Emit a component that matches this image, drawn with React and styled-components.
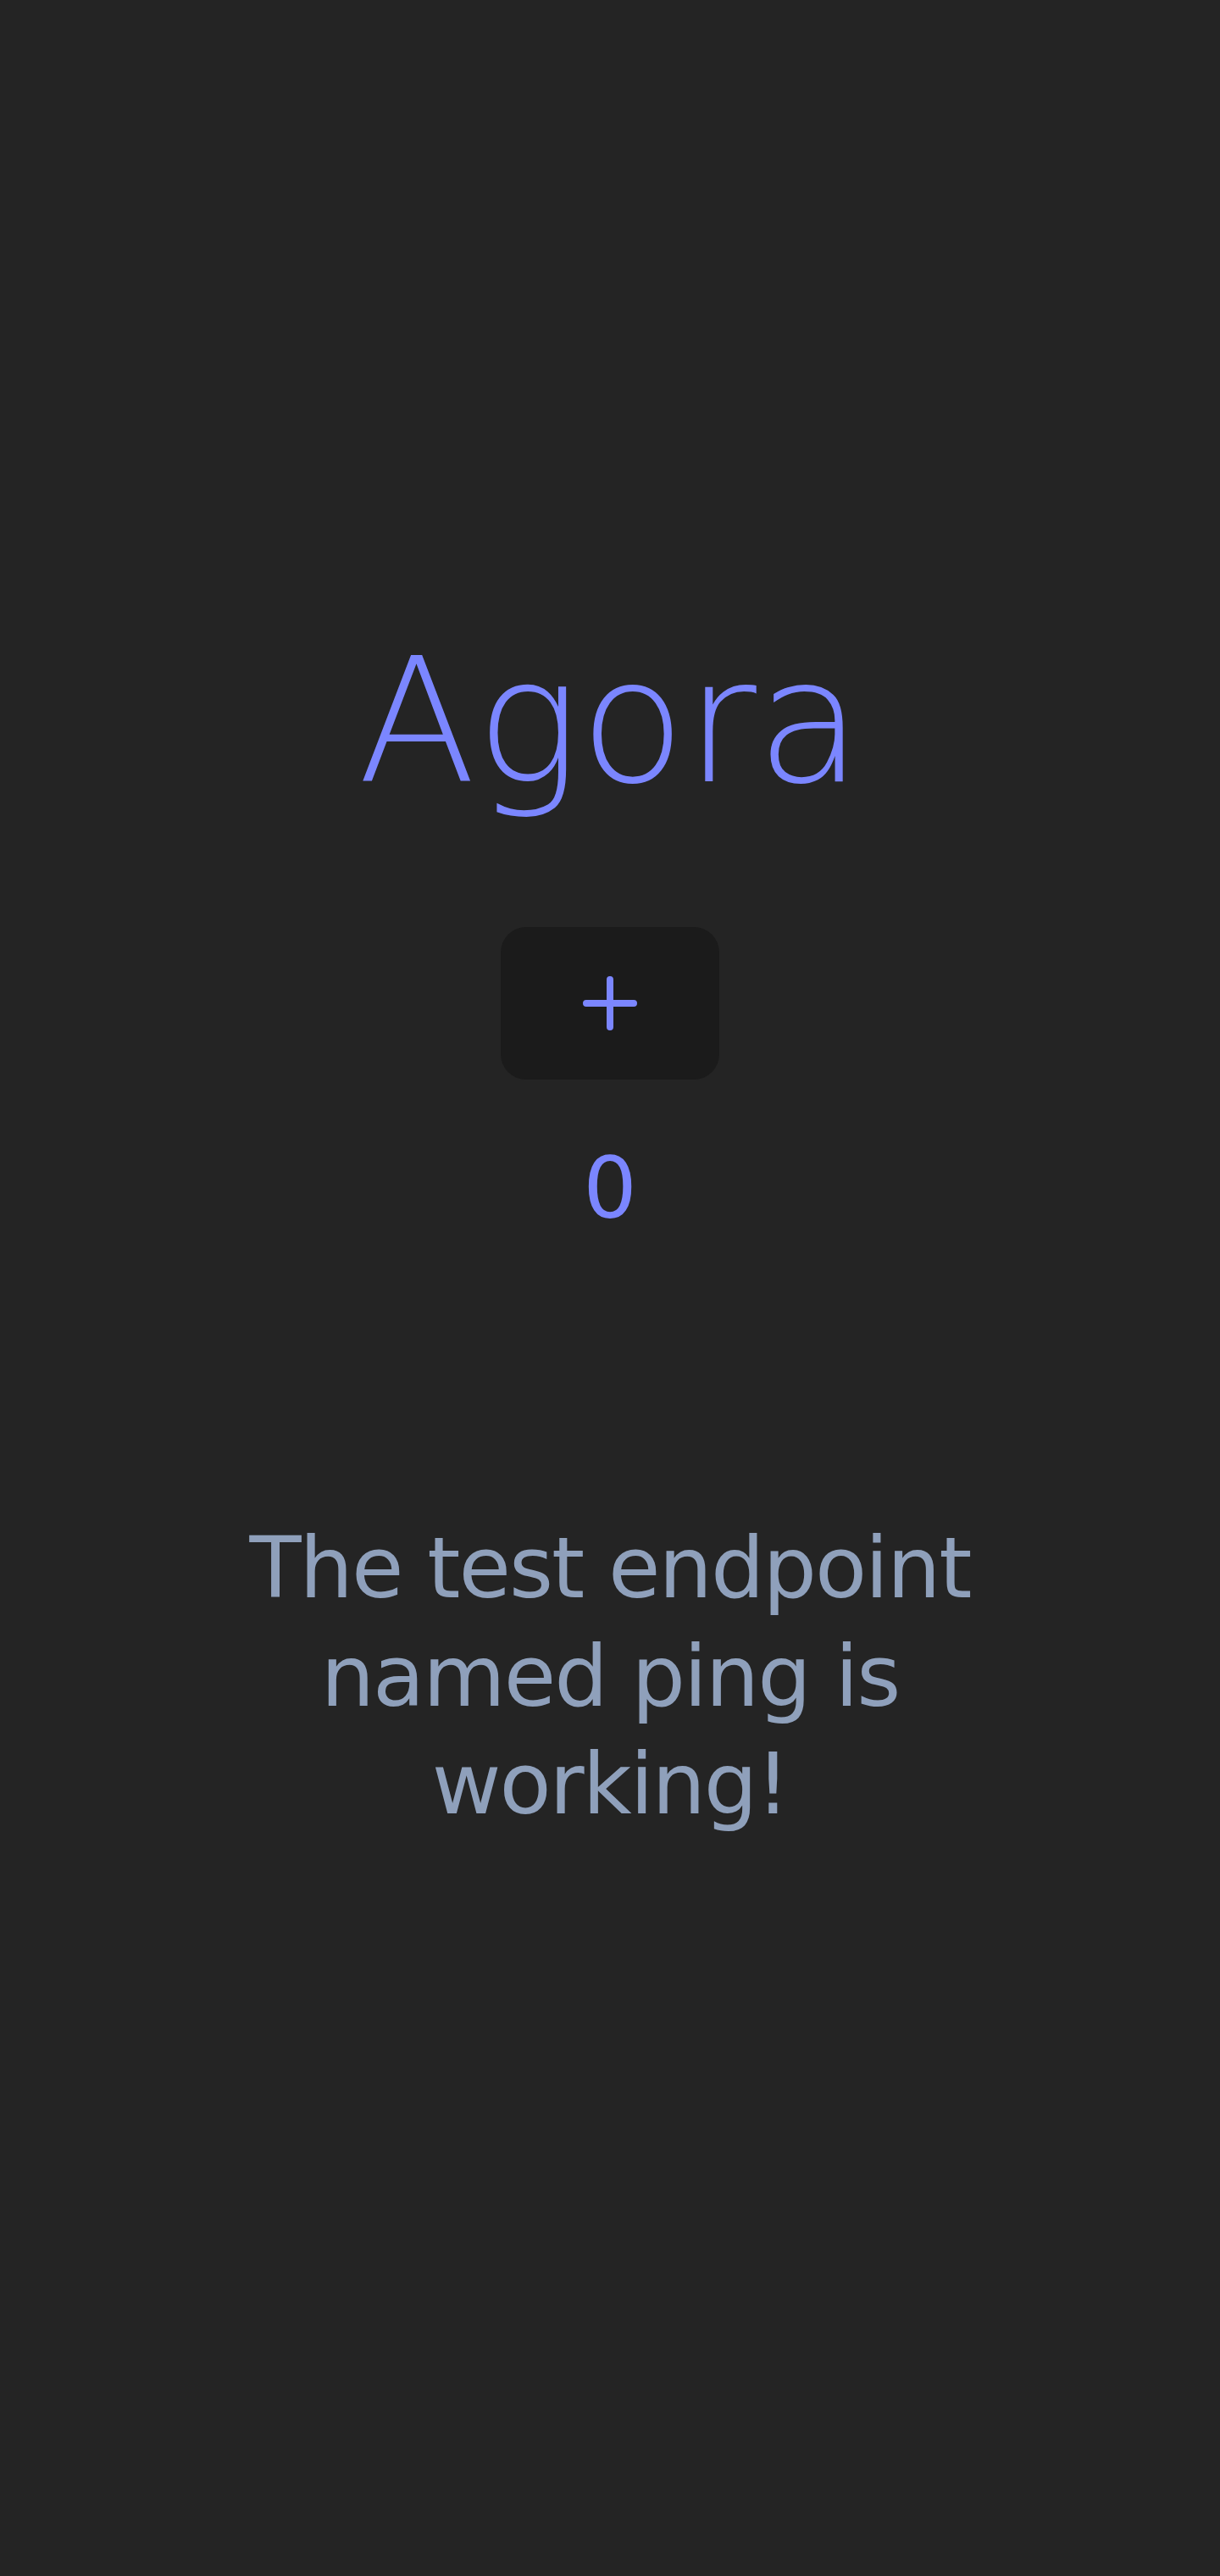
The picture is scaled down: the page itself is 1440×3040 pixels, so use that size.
import React, { useState } from "react";
import styled, { createGlobalStyle } from "styled-components";

const GlobalStyle = createGlobalStyle`
  html, body {
    margin: 0;
    padding: 0;
    background: #242424;
  }
  body {
    font-family: "DejaVu Sans", "Liberation Sans", sans-serif;
  }
`;

const Page = styled.main`
  min-height: 3040px;
  box-sizing: border-box;
  padding-top: 740px;
  display: flex;
  flex-direction: column;
  align-items: center;
  background: #242424;
`;

const Title = styled.h1`
  margin: 0;
  font-family: "DejaVu Sans", sans-serif;
  font-weight: 200;
  font-size: 204px;
  line-height: 224px;
  color: #7b86ff;
`;

const AddButton = styled.button`
  margin-top: 130px;
  width: 258px;
  height: 180px;
  border: none;
  border-radius: 30px;
  background: #1b1b1b;
  display: flex;
  align-items: center;
  justify-content: center;
  cursor: pointer;
  padding: 0;
`;

const Count = styled.div`
  margin-top: 69px;
  font-size: 100px;
  line-height: 120px;
  color: #7b86ff;
`;

const Message = styled.p`
  margin: 324px 0 0;
  max-width: 1000px;
  text-align: center;
  font-size: 100px;
  letter-spacing: -2px;
  line-height: 127.5px;
  color: #8fa0bb;
`;

const PlusIcon = () => (
  <svg width="72" height="72" viewBox="0 0 72 72" fill="none">
    <path
      d="M36 8V64M8 36H64"
      stroke="#7b86ff"
      strokeWidth="8"
      strokeLinecap="round"
    />
  </svg>
);

export default function App() {
  const [count, setCount] = useState(0);
  return (
    <>
      <GlobalStyle />
      <Page>
        <Title>Agora</Title>
        <AddButton onClick={() => setCount((c) => c + 1)} aria-label="Increment">
          <PlusIcon />
        </AddButton>
        <Count>{count}</Count>
        <Message>The test endpoint named ping is working!</Message>
      </Page>
    </>
  );
}
